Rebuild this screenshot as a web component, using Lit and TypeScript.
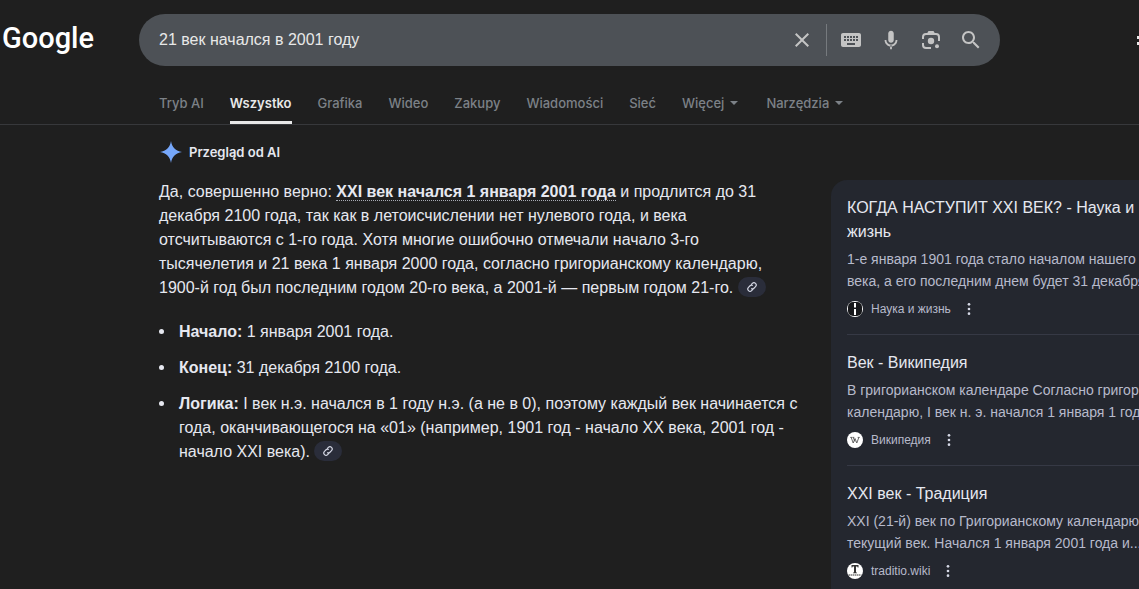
import { LitElement, html, css, svg } from "lit";
import { customElement } from "lit/decorators.js";
import { classMap } from "lit/directives/class-map.js";

interface Tab {
  label: string;
  active?: boolean;
  menu?: boolean;
}

interface Source {
  title: string;
  lines: string[];
  site: string;
  icon: unknown;
}

const TABS: Tab[] = [
  { label: "Tryb AI" },
  { label: "Wszystko", active: true },
  { label: "Grafika" },
  { label: "Wideo" },
  { label: "Zakupy" },
  { label: "Wiadomości" },
  { label: "Sieć" },
  { label: "Więcej", menu: true },
];

const SOURCES: Source[] = [
  {
    title: "КОГДА НАСТУПИТ XXI ВЕК? - Наука и жизнь",
    lines: ["1-е января 1901 года стало началом нашего XX", "века, а его последним днем будет 31 декабря"],
    site: "Наука и жизнь",
    icon: svg`<circle cx="8" cy="8" r="8" fill="#fff"/><rect x="1" y="1" width="14" height="14" rx="5" fill="#17181b"/><path d="M7 2h2v4.5H7zM7 8h2v6H7z" fill="#fff"/>`,
  },
  {
    title: "Век - Википедия",
    lines: ["В григорианском календаре Согласно григорианскому", "календарю, I век н. э. начался 1 января 1 года"],
    site: "Википедия",
    icon: svg`<circle cx="8" cy="8" r="8" fill="#fff"/><path d="M4.200 5.500l2 5.500L8 6.500 9.800 11l2-5.500M6.200 5.500L8 9.500M3.300 5.400h2M5.700 5.400h1.600M10.700 5.400h2" fill="none" stroke="#444" stroke-width=".8"/>`,
  },
  {
    title: "XXI век - Традиция",
    lines: ["XXI (21-й) век по Григорианскому календарю", "текущий век. Начался 1 января 2001 года и..."],
    site: "traditio.wiki",
    icon: svg`<circle cx="8" cy="8" r="8" fill="#fff"/><path d="M4.500 2h7v2.500h-.8l-.4-1H9V9.500h1v.8H6v-.8h1v-6H5.700l-.4 1h-.8z" fill="#333"/><path d="M1.500 12h13" stroke="#777" stroke-width="1.500" stroke-dasharray="1.500 .5"/>`,
  },
];

const icon = (size: number, body: unknown) =>
  html`<svg width=${size} height=${size} viewBox="0 0 24 24" fill="currentColor" aria-hidden="true">${body}</svg>`;

const clearIcon = svg`<path d="M19 6.410 17.590 5 12 10.590 6.410 5 5 6.410 10.590 12 5 17.590 6.410 19 12 13.410 17.590 19 19 17.590 13.410 12z"/>`;
const keyboardIcon = svg`<path d="M20 5H4c-1.100 0-1.990.9-1.990 2L2 17c0 1.100.9 2 2 2h16c1.100 0 2-.9 2-2V7c0-1.100-.9-2-2-2zm-9 3h2v2h-2V8zm0 3h2v2h-2v-2zM8 8h2v2H8V8zm0 3h2v2H8v-2zm-1 2H5v-2h2v2zm0-3H5V8h2v2zm9 7H8v-2h8v2zm0-4h-2v-2h2v2zm0-3h-2V8h2v2zm3 3h-2v-2h2v2zm0-3h-2V8h2v2z"/>`;
const micIcon = svg`<path d="M12 15c1.660 0 3-1.310 3-2.970V5.020C15 3.340 13.660 2 12 2S9 3.340 9 5.020v7.010C9 13.690 10.340 15 12 15z"/><path d="M11 17.920h2V22h-2zM17 11.880c0 2.760-2.240 5.070-5 5.070s-5-2.310-5-5.070H5c0 3.870 3.130 7.120 7 7.120s7-3.250 7-7.120h-2z"/>`;
const lensIcon = svg`<circle cx="12" cy="13" r="3.200"/><circle cx="18" cy="18.200" r="2"/><path d="M4 11V9c0-2 1-3 3-3h10c2 0 3 1 3 3v4M4 15v2c0 2 1 3 3 3h5" fill="none" stroke="currentColor" stroke-width="2"/><path d="M9.500 3h5L16 5.500H8z"/>`;
const searchIcon = svg`<path d="M15.500 14h-.79l-.28-.27C15.410 12.590 16 11.110 16 9.500 16 5.910 13.090 3 9.500 3S3 5.910 3 9.500 5.910 16 9.500 16c1.610 0 3.090-.59 4.230-1.570l.27.28v.79l5 4.990L20.490 19l-4.990-5zm-6 0C7.010 14 5 11.990 5 9.500S7.010 5 9.500 5 14 7.010 14 9.500 11.990 14 9.500 14z"/>`;
const moreIcon = svg`<circle cx="12" cy="5" r="2"/><circle cx="12" cy="12" r="2"/><circle cx="12" cy="19" r="2"/>`;
const sparkIcon = svg`<path d="M12 1c.9 6.200 4.800 10.100 11 11-6.200.9-10.100 4.800-11 11-.9-6.200-4.800-10.100-11-11 6.200-.9 10.100-4.800 11-11z"/>`;
const linkIcon = svg`<g transform="rotate(-45 12 12)" fill="none" stroke="currentColor" stroke-width="2.200"><path d="M10 16.500H6.500a4.500 4.500 0 0 1 0-9H11a4.500 4.500 0 0 1 4.300 3.500M14 7.500h3.500a4.500 4.500 0 0 1 0 9H13a4.500 4.500 0 0 1-4.300-3.500"/></g>`;

@customElement("search-header")
class SearchHeader extends LitElement {
  static styles = css`
    :host {
      display: block;
      border-bottom: 1px solid #37383b;
    }
    .top {
      display: grid;
      grid-template-columns: 136px minmax(0, 861px) 1fr;
      gap: 3px;
      align-items: center;
      padding-top: 14px;
    }
    .logo {
      padding: 0 0 4px 2px;
      color: #fff;
      font: 500 29px/40px Roboto, sans-serif;
      text-decoration: none;
    }
    .box {
      display: flex;
      align-items: center;
      height: 52px;
      padding: 0 9px 0 20px;
      box-sizing: border-box;
      border-radius: 26px;
      background: #4d5156;
    }
    .query {
      flex: 1;
      min-width: 0;
      padding: 0;
      border: 0;
      outline: 0;
      background: none;
      color: #e8e8e8;
      font: 16px/24px "Liberation Sans", sans-serif;
    }
    button {
      padding: 0;
      border: 0;
      background: none;
      color: inherit;
      font: inherit;
      cursor: pointer;
    }
    .tool {
      display: grid;
      place-items: center;
      width: 40px;
      height: 40px;
      color: #c4c4c4;
    }
    .clear {
      margin-right: 4px;
    }
    .rule {
      width: 1px;
      height: 32px;
      margin-right: 4px;
      background: #767a7e;
    }
    .more {
      display: grid;
      gap: 3px;
      justify-self: end;
      width: 2px;
    }
    .dot {
      height: 3px;
      background: #e8e8e8;
    }
    .tabs {
      display: flex;
      gap: 26px;
      padding: 24px 0 0 159px;
      color: #7c8187;
      font: 500 13px/28px Inter, sans-serif;
    }
    .tab {
      display: flex;
      align-items: center;
      gap: 6px;
      height: 34px;
      padding-bottom: 6px;
      box-sizing: border-box;
      border-bottom: 3px solid transparent;
      color: inherit;
      text-decoration: none;
      white-space: nowrap;
    }
    .active {
      border-color: #e8e8e8;
      color: #e8e8e8;
      font-weight: 600;
    }
    .caret {
      border: 4px solid transparent;
      border-top-color: currentColor;
      border-bottom: 0;
    }
    .tools {
      margin-left: 2px;
    }
  `;

  render() {
    return html`
      <div class="top">
        <a class="logo" href="#">Google</a>
        <form class="box" role="search">
          <input class="query" type="text" aria-label="Szukaj" value="21 век начался в 2001 году" />
          <button class="tool clear" type="button" aria-label="Wyczyść">${icon(24, clearIcon)}</button>
          <span class="rule"></span>
          <button class="tool" type="button" aria-label="Klawiatura">${icon(24, keyboardIcon)}</button>
          <button class="tool" type="button" aria-label="Mikrofon">${icon(22, micIcon)}</button>
          <button class="tool" type="button" aria-label="Obiektyw">${icon(24, lensIcon)}</button>
          <button class="tool" type="submit" aria-label="Szukaj">${icon(24, searchIcon)}</button>
        </form>
        <button class="more" aria-label="Ustawienia"><span class="dot"></span><span class="dot"></span></button>
      </div>
      <nav class="tabs">
        ${TABS.map((t) =>
          t.menu
            ? html`<button class="tab">${t.label}<span class="caret"></span></button>`
            : html`<a class=${classMap({ tab: true, active: !!t.active })} href="#">${t.label}</a>`
        )}
        <button class="tab tools">Narzędzia<span class="caret"></span></button>
      </nav>
    `;
  }
}

@customElement("ai-overview")
class AiOverview extends LitElement {
  static styles = css`
    :host {
      display: block;
      color: #e6e8f0;
      font: 16px/24px "Liberation Sans", sans-serif;
    }
    .heading {
      display: flex;
      align-items: center;
      gap: 6px;
      margin: 0 0 16px;
      font: 600 13px/24px Inter, sans-serif;
    }
    .spark {
      display: flex;
      color: #76a7fa;
    }
    p {
      margin: 0 0 20px;
    }
    .mark {
      border-bottom: 1px dotted #a8abb4;
      line-height: 18px;
    }
    ul {
      display: grid;
      gap: 12px;
      margin: 0;
      padding: 0;
      list-style: none;
    }
    li {
      display: grid;
      grid-template-columns: 5px 1fr;
      gap: 15px;
    }
    li::before {
      content: "";
      height: 5px;
      margin-top: 9px;
      border-radius: 50%;
      background: currentColor;
    }
    .cite {
      display: inline-grid;
      place-items: center;
      width: 28px;
      height: 20px;
      padding: 0;
      border: 0;
      border-radius: 10px;
      background: #2a2d3a;
      color: #d6d9e6;
      vertical-align: baseline;
      cursor: pointer;
    }
  `;

  private cite() {
    return html`<button class="cite" aria-label="Linki">${icon(12, linkIcon)}</button>`;
  }

  render() {
    return html`
      <h2 class="heading"><span class="spark">${icon(24, sparkIcon)}</span>Przegląd od AI</h2>
      <p>
        Да, совершенно верно: <b class="mark">XXI век начался 1 января 2001 года</b> и продлится до 31<br />
        декабря 2100 года, так как в летоисчислении нет нулевого года, и века<br />
        отсчитываются с 1-го года. Хотя многие ошибочно отмечали начало 3-го<br />
        тысячелетия и 21 века 1 января 2000 года, согласно григорианскому календарю,<br />
        1900-й год был последним годом 20-го века, а 2001-й — первым годом 21-го.
        ${this.cite()}
      </p>
      <ul>
        <li><span><b>Начало:</b> 1 января 2001 года.</span></li>
        <li><span><b>Конец:</b> 31 декабря 2100 года.</span></li>
        <li>
          <span>
            <b>Логика:</b> I век н.э. начался в 1 году н.э. (а не в 0), поэтому каждый век начинается с<br />
            года, оканчивающегося на «01» (например, 1901 год - начало XX века, 2001 год -<br />
            начало XXI века). ${this.cite()}
          </span>
        </li>
      </ul>
    `;
  }
}

@customElement("source-list")
class SourceList extends LitElement {
  static styles = css`
    :host {
      display: block;
      padding-left: 16px;
      border-radius: 16px 0 0 0;
      background: #24272f;
      color: #e6e8f0;
      font-family: "Liberation Sans", sans-serif;
    }
    .card {
      padding: 16px 0 14px;
      border-bottom: 1px solid #363945;
    }
    h3 {
      margin: 0 0 4px;
      font: 400 16px/24px "Liberation Sans", sans-serif;
    }
    .link {
      color: inherit;
      text-decoration: none;
    }
    .line {
      color: #b7bacb;
      font-size: 14px;
      line-height: 22px;
      white-space: nowrap;
    }
    .site {
      display: flex;
      align-items: center;
      gap: 8px;
      margin-top: 6px;
      color: #b7bacb;
      font-size: 12px;
      line-height: 22px;
    }
    .site button {
      display: flex;
      padding: 0 2px;
      border: 0;
      background: none;
      color: #d6d9e6;
      cursor: pointer;
    }
  `;

  render() {
    return SOURCES.map(
      (s) => html`
        <article class="card">
          <h3><a class="link" href="#">${s.title}</a></h3>
          ${s.lines.map((l) => html`<div class="line">${l}</div>`)}
          <div class="site">
            <svg width="16" height="16" viewBox="0 0 16 16" aria-hidden="true">${s.icon}</svg>
            <span>${s.site}</span>
            <button aria-label="Więcej">${icon(16, moreIcon)}</button>
          </div>
        </article>
      `
    );
  }
}

@customElement("app-root")
class AppRoot extends LitElement {
  static styles = css`
    :host {
      display: block;
      height: 100vh;
      overflow: hidden;
      background: #1f1f1f;
    }
    .body {
      display: grid;
      grid-template-columns: minmax(0, 652px) minmax(308px, 1fr);
      gap: 20px;
      padding-left: 159px;
    }
    .main {
      padding-top: 15px;
    }
    .side {
      min-width: 0;
      margin-top: 55px;
    }
  `;

  render() {
    return html`
      <search-header></search-header>
      <main class="body">
        <ai-overview class="main"></ai-overview>
        <source-list class="side"></source-list>
      </main>
    `;
  }
}
